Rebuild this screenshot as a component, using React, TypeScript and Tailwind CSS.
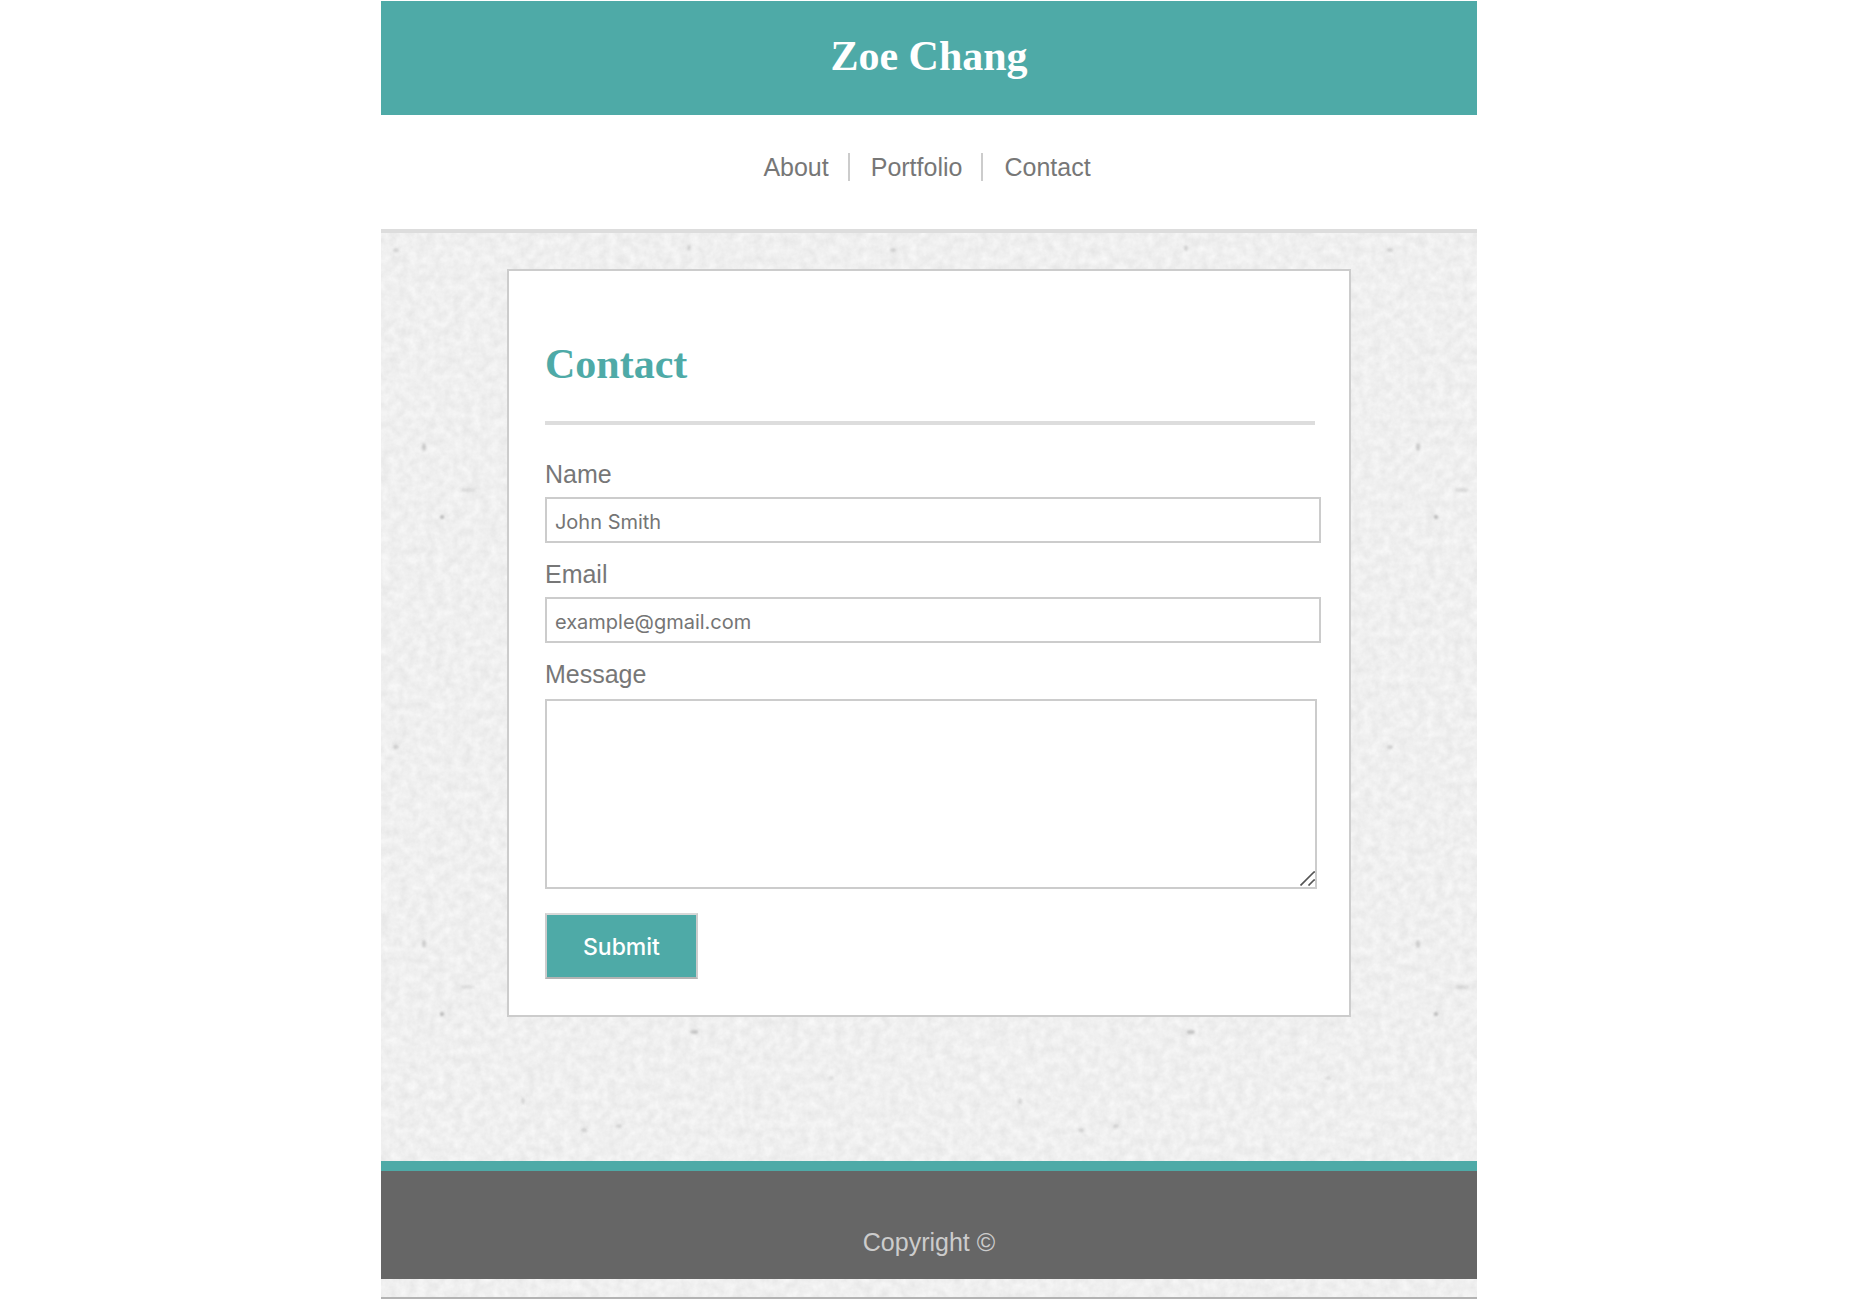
import type { ReactNode } from "react";

const specks = [
  { x: 61, y: 284, rx: 2, ry: 2, o: 0.35 },
  { x: 43, y: 214, rx: 2, ry: 4, o: 0.2 },
  { x: 87, y: 257, rx: 7, ry: 2, o: 0.12 },
  { x: 15, y: 17, rx: 3, ry: 2, o: 0.18 },
  { x: 308, y: 15, rx: 2, ry: 3, o: 0.2 },
  { x: 313, y: 302, rx: 4, ry: 2, o: 0.25 },
  { x: 203, y: 400, rx: 3, ry: 2, o: 0.16 },
  { x: 238, y: 396, rx: 3, ry: 2, o: 0.16 },
  { x: 142, y: 371, rx: 2, ry: 3, o: 0.14 },
  { x: 450, y: 348, rx: 3, ry: 2, o: 0.12 },
];

function PaperTexture() {
  return (
    <svg className="absolute inset-0 -z-10 h-full w-full" aria-hidden="true">
      <defs>
        <filter id="grain" x="0" y="0" width="100%" height="100%" colorInterpolationFilters="sRGB">
          <feTurbulence type="fractalNoise" baseFrequency="0.11" numOctaves="4" seed="7" />
          <feColorMatrix values="0 0 0 0.085 0.896  0 0 0 0.085 0.896  0 0 0 0.085 0.896  0 0 0 0 1" />
        </filter>
        <filter id="soft" x="-100%" y="-100%" width="300%" height="300%">
          <feGaussianBlur stdDeviation="0.8" />
        </filter>
        <pattern id="specks" y="232" width="497" height="497" patternUnits="userSpaceOnUse">
          {specks.map((s) => (
            <ellipse key={`${s.x}-${s.y}`} cx={s.x} cy={s.y} rx={s.rx} ry={s.ry} fill="#444" opacity={s.o} filter="url(#soft)" />
          ))}
        </pattern>
      </defs>
      <rect width="100%" height="100%" filter="url(#grain)" />
      <rect width="100%" height="100%" fill="url(#specks)" />
    </svg>
  );
}

function Label({ htmlFor, children }: { htmlFor: string; children: ReactNode }) {
  return (
    <label htmlFor={htmlFor} className="mb-[9px] block text-[25px] leading-7">
      {children}
    </label>
  );
}

const field =
  "block w-full border-2 border-[#cccccc] bg-white px-2 pt-1 font-[Inter,sans-serif] text-[20px] text-[#757575] placeholder:text-[#757575] placeholder:opacity-100 outline-none";

const links = ["About", "Portfolio", "Contact"];

export default function App() {
  return (
    <div className="bg-white pt-px font-['Liberation_Sans',Arial,sans-serif] text-[#777777]">
      <div className="relative isolate mx-auto w-[59%] border-b-2 border-[#b3b3b3] pb-[18px]">
        <PaperTexture />
        <header className="bg-[#4eaaa7] pt-[34px] pb-[38px] text-center">
          <h1 className="font-['Liberation_Serif',serif] text-[42px] leading-[42px] font-bold text-white">Zoe Chang</h1>
        </header>
        <nav className="border-b-4 border-[#dddddd] bg-white pt-[38px] pb-12">
          <ul className="flex justify-center gap-[21px] pr-1 text-[25px] leading-7">
            {links.map((l) => (
              <li key={l} className="border-r-2 border-[#cccccc] pr-[19px] last:border-0 last:pr-0">
                <a href={`#${l.toLowerCase()}`}>{l}</a>
              </li>
            ))}
          </ul>
        </nav>
        <main className="pt-9 pb-36">
          <section className="mx-auto w-[77%] border-2 border-[#cccccc] bg-white pt-[72px] pr-7 pb-9 pl-9">
            <h2 className="mb-9 font-['Liberation_Serif',serif] text-[42px] leading-[42px] font-bold text-[#4eaaa7]">Contact</h2>
            <hr className="mr-[6px] mb-[35px] border-t-4 border-[#dddddd]" />
            <form onSubmit={(e) => e.preventDefault()}>
              <div className="mb-[17px]">
                <Label htmlFor="name">Name</Label>
                <input id="name" type="text" placeholder="John Smith" className={`${field} h-[46px]`} />
              </div>
              <div className="mb-[17px]">
                <Label htmlFor="email">Email</Label>
                <input id="email" type="email" placeholder="example@gmail.com" className={`${field} h-[46px]`} />
              </div>
              <div className="mr-1 mb-6">
                <Label htmlFor="message">Message</Label>
                <div className="relative pt-[2px]">
                  <textarea id="message" className={`${field} h-[190px] resize-none`} />
                  <svg className="pointer-events-none absolute right-[2px] bottom-[3px] h-[15px] w-[15px]" viewBox="0 0 15 15" fill="none" stroke="#555" strokeWidth="1.7" aria-hidden="true">
                    <path d="M0.5 14.5 L14 1 H15 M8.5 14.5 L14 9 H15" />
                  </svg>
                </div>
              </div>
              <button
                type="submit"
                className="block h-[66px] border-2 border-t-[#d8d8d8] border-r-[#cccccc] border-b-[#b3b3b3] border-l-[#cccccc] bg-[#4eaaa7] px-9 pt-[2px] font-[Inter,sans-serif] text-[23px] leading-7 font-medium text-white"
              >
                Submit
              </button>
            </form>
          </section>
        </main>
        <footer className="border-t-[10px] border-[#4eaaa7] bg-[#666666] pt-[57px] pb-[23px] text-center">
          <p className="text-[25px] leading-7 text-[#cccccc]">Copyright ©</p>
        </footer>
      </div>
    </div>
  );
}
